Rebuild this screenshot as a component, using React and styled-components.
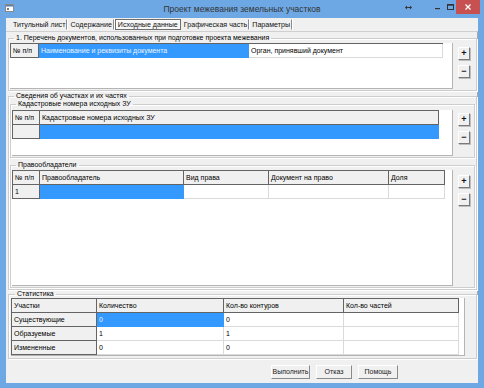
import React from "react";
import styled, { createGlobalStyle } from "styled-components";

const GlobalStyle = createGlobalStyle`
  html, body {
    margin: 0;
    padding: 0;
    background: #fff;
  }
  body {
    font-family: "Liberation Sans", Arial, sans-serif;
  }
`;

const tabs = [
  { id: 1, name: "Титульный лист" },
  { id: 2, name: "Содержание" },
  { id: 3, name: "Исходные данные", active: true },
  { id: 4, name: "Графическая часть" },
  { id: 5, name: "Параметры" },
];

const docCols = "28px 210px 194px";
const cadCols = "27px 399px";
const ownerCols = "27px 144px 85px 120px 56px";
const statCols = "85px 127px 120px 115px";

const stats = [
  { name: "Существующие", count: "0", contours: "0", parts: "", sel: true },
  { name: "Образуемые", count: "1", contours: "1", parts: "" },
  { name: "Измененные", count: "0", contours: "0", parts: "" },
];

function SideButtons({ top }) {
  return (
    <ButtonCol $top={top}>
      <SmallButton>+</SmallButton>
      <SmallButton>−</SmallButton>
    </ButtonCol>
  );
}

function App() {
  return (
    <>
      <GlobalStyle />
      <Window>
        <TitleBar>
          <IconSlot>
            <svg width="9" height="8" viewBox="0 0 9 8">
              <rect x="0.5" y="0.5" width="8" height="7" fill="#fff" stroke="#8a8a8a" />
              <rect x="1" y="1" width="7" height="1.5" fill="#5b7fa8" />
              <rect x="2" y="4" width="2" height="2" fill="#7a7a7a" />
            </svg>
          </IconSlot>
          <Title>Проект межевания земельных участков</Title>
          <Controls>
            <CtrlBox $w={13} $mr={17}>
              <svg width="7" height="5" viewBox="0 0 7 5">
                <path d="M0 2.5 L2 0.5 V4.5 Z M7 2.5 L5 0.5 V4.5 Z M2 2 H5 V3 H2 Z" fill="#333" />
              </svg>
            </CtrlBox>
            <CtrlBox $w={12}>
              <svg width="6" height="6" viewBox="0 0 6 6">
                <rect x="0" y="4" width="5" height="1.2" fill="#333" />
              </svg>
            </CtrlBox>
            <CtrlBox $w={12}>
              <svg width="7" height="6" viewBox="0 0 7 6">
                <rect x="0.5" y="0.5" width="6" height="5" fill="none" stroke="#333" />
                <rect x="0.5" y="0.5" width="6" height="1.2" fill="#333" />
              </svg>
            </CtrlBox>
            <CloseBox>
              <svg width="6" height="6" viewBox="0 0 6 6">
                <path d="M0.5 0.5 L5.5 5.5 M5.5 0.5 L0.5 5.5" stroke="#fff" strokeWidth="1.3" />
              </svg>
            </CloseBox>
          </Controls>
        </TitleBar>

        <Client>
          <TabStrip>
            {tabs.map((t) => (
              <Tab key={t.id} $active={t.active}>
                {t.name}
              </Tab>
            ))}
          </TabStrip>

          <TabPage>
            <Group $pad="1px 6px 1px 1px">
              <Legend>1. Перечень документов, использованных при подготовке проекта межевания</Legend>
              <GridRow>
                <Viewport $h={46}>
                  <Table $cols={docCols}>
                    <Cell $kind="head">№ п/п</Cell>
                    <Cell $kind="sel">Наименование и реквизиты документа</Cell>
                    <Cell $kind="data">Орган, принявший документ</Cell>
                  </Table>
                </Viewport>
                <SideButtons top={4} />
              </GridRow>
            </Group>

            <Group $pad="0 1px 1px 1px" $mt={1}>
              <Legend>Сведения об участках и их частях</Legend>
              <Group $pad="2px 4px 1px 1px">
                <Legend>Кадастровые номера исходных ЗУ</Legend>
                <GridRow>
                  <Viewport $h={46}>
                    <Table $cols={cadCols}>
                      <Cell $kind="head">№ п/п</Cell>
                      <Cell $kind="head">Кадастровые номера исходных ЗУ</Cell>
                      <Cell $kind="head"></Cell>
                      <Cell $kind="sel"></Cell>
                    </Table>
                  </Viewport>
                  <SideButtons top={3} />
                </GridRow>
              </Group>
              <Group $pad="1px 4px 1px 1px" $mt={3}>
                <Legend>Правообладатели</Legend>
                <GridRow>
                  <Viewport $h={116}>
                    <Table $cols={ownerCols}>
                      <Cell $kind="head">№ п/п</Cell>
                      <Cell $kind="head">Правообладатель</Cell>
                      <Cell $kind="head">Вид права</Cell>
                      <Cell $kind="head">Документ на право</Cell>
                      <Cell $kind="head">Доля</Cell>
                      <Cell $kind="head">1</Cell>
                      <Cell $kind="sel"></Cell>
                      <Cell $kind="data"></Cell>
                      <Cell $kind="data"></Cell>
                      <Cell $kind="data"></Cell>
                    </Table>
                  </Viewport>
                  <SideButtons top={5} />
                </GridRow>
              </Group>
            </Group>

            <Group $pad="0 11px 2px 2px">
              <Legend>Статистика</Legend>
              <Viewport $h={58}>
                <Table $cols={statCols}>
                  <Cell $kind="head">Участки</Cell>
                  <Cell $kind="head">Количество</Cell>
                  <Cell $kind="head">Кол-во контуров</Cell>
                  <Cell $kind="head">Кол-во частей</Cell>
                  {stats.map((r) => (
                    <React.Fragment key={r.name}>
                      <Cell $kind="head">{r.name}</Cell>
                      <Cell $kind={r.sel ? "sel" : "data"}>{r.count}</Cell>
                      <Cell $kind="data">{r.contours}</Cell>
                      <Cell $kind="data">{r.parts}</Cell>
                    </React.Fragment>
                  ))}
                </Table>
              </Viewport>
            </Group>
          </TabPage>

          <Footer>
            <FootButton $w={39}>Выполнить</FootButton>
            <FootButton $w={36}>Отказ</FootButton>
            <FootButton $w={40}>Помощь</FootButton>
          </Footer>
        </Client>
      </Window>
    </>
  );
}

export default App;

const Window = styled.div`
  width: 484px;
  height: 388px;
  background: #6ea8e4;
  display: flex;
  flex-direction: column;
  overflow: hidden;
`;

const TitleBar = styled.div`
  height: 18px;
  flex: 0 0 18px;
  display: grid;
  grid-template-columns: 1fr auto 1fr;
  align-items: start;
`;

const IconSlot = styled.div`
  padding: 4px 0 0 5px;
  line-height: 0;
`;

const Title = styled.div`
  font-size: 8.5px;
  line-height: 18px;
  color: #333;
`;

const Controls = styled.div`
  display: flex;
  justify-content: flex-end;
  align-items: flex-start;
  padding-right: 4px;
`;

const CtrlBox = styled.div`
  width: ${(p) => p.$w}px;
  margin-right: ${(p) => p.$mr || 0}px;
  height: 14px;
  display: flex;
  align-items: center;
  justify-content: center;
`;

const CloseBox = styled.div`
  width: 24px;
  height: 14px;
  background: #c75050;
  display: flex;
  align-items: center;
  justify-content: center;
`;

const Client = styled.div`
  flex: 1;
  margin: 0 6px 5px 6px;
  background: #f0f0f0;
  display: flex;
  flex-direction: column;
  font-size: 7px;
  color: #000;
`;

const TabStrip = styled.div`
  height: 13px;
  flex: 0 0 13px;
  box-sizing: border-box;
  display: flex;
  align-items: flex-end;
  padding: 0 0 1px 5px;
`;

const Tab = styled.div`
  height: 11px;
  line-height: 10px;
  box-sizing: border-box;
  font-size: 7.1px;
  padding: 0 ${(p) => (p.$active ? 2 : 1)}px;
  margin-right: 1px;
  white-space: nowrap;
  color: #111;
  border: 1px solid ${(p) => (p.$active ? "#6d6d6d" : "transparent")};
  border-right: 1px solid ${(p) => (p.$active ? "#6d6d6d" : "#8c8c8c")};
  background: ${(p) => (p.$active ? "#f7f7f7" : "transparent")};
  box-shadow: ${(p) => (p.$active ? "inset 1px 1px 0 #fff" : "1px 0 0 #fff")};
`;

const TabPage = styled.div`
  flex: 0 0 329px;
  box-sizing: border-box;
  border-top: 1px solid #cfcfcf;
  border-right: 1px solid #a9a9a9;
  padding: 2px 0 0 2px;
  display: flex;
  flex-direction: column;
`;

const Group = styled.fieldset`
  margin: ${(p) => p.$mt || 0}px 0 0 0;
  padding: ${(p) => p.$pad};
  min-width: 0;
  border: 1px solid #cdcdcd;
  box-shadow: inset 1px 1px 0 #fff, 1px 1px 0 #fff;
  display: flex;
  flex-direction: column;
`;

const Legend = styled.legend`
  font-size: 7px;
  line-height: 8px;
  padding: 0 2px;
  margin-left: 4px;
  color: #000;
`;

const GridRow = styled.div`
  display: grid;
  grid-template-columns: 1fr 12px;
  column-gap: 5px;
  align-items: start;
`;

const Viewport = styled.div`
  height: ${(p) => p.$h}px;
  box-sizing: border-box;
  background: #fff;
  border-style: solid;
  border-color: #b4b4b4;
  border-width: 0 1px 1px 0;
  overflow: hidden;
`;

const Table = styled.div`
  display: grid;
  grid-template-columns: ${(p) => p.$cols};
  width: max-content;
  border-top: 1px solid #646464;
  border-left: 1px solid #646464;
`;

const cellBg = { head: "#f0f0f0", sel: "#3399ff", data: "#fff" };
const cellLine = { head: "#646464", sel: "#3399ff", data: "#dadada" };

const Cell = styled.div`
  height: 14px;
  box-sizing: border-box;
  padding: 0 2px;
  font-size: 7px;
  line-height: 13px;
  white-space: nowrap;
  overflow: hidden;
  background: ${(p) => cellBg[p.$kind]};
  color: ${(p) => (p.$kind === "sel" ? "#eaf4ff" : "#000")};
  border-right: 1px solid ${(p) => cellLine[p.$kind]};
  border-bottom: 1px solid ${(p) => cellLine[p.$kind]};
`;

const ButtonCol = styled.div`
  display: flex;
  flex-direction: column;
  gap: 5px;
  padding-top: ${(p) => p.$top}px;
`;

const SmallButton = styled.div`
  width: 12px;
  height: 13px;
  box-sizing: border-box;
  background: #f0f0f0;
  border-top: 1px solid #fff;
  border-left: 1px solid #fff;
  border-right: 1px solid #7a7a7a;
  border-bottom: 1px solid #7a7a7a;
  box-shadow: 1px 1px 0 #bdbdbd;
  font-size: 9px;
  font-weight: bold;
  line-height: 11px;
  text-align: center;
  color: #111;
`;

const Footer = styled.div`
  flex: 1;
  display: flex;
  align-items: flex-start;
  gap: 6px;
  padding: 5px 0 0 265px;
`;

const FootButton = styled.div`
  width: ${(p) => p.$w}px;
  height: 14px;
  box-sizing: border-box;
  border-top: 1px solid #fff;
  border-left: 1px solid #fff;
  border-right: 1px solid #8a8a8a;
  border-bottom: 1px solid #8a8a8a;
  background: #f0f0f0;
  font-size: 7px;
  line-height: 12px;
  text-align: center;
  color: #222;
`;
